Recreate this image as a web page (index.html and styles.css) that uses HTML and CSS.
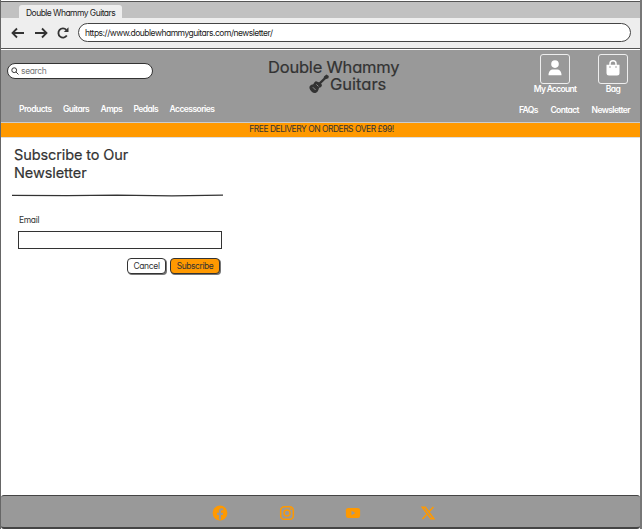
FILE: index.html
```html
<!DOCTYPE html>
<html lang="en">
<head>
<meta charset="utf-8">
<title>Double Whammy Guitars</title>
<link rel="stylesheet" href="styles.css">
</head>
<body>
<div class="window">
  <div class="tabs"><div class="tab"><span>Double Whammy Guitars</span></div></div>
  <div class="toolbar">
    <svg class="arrow" viewBox="0 0 14 12"><path d="M13 6H2M6 1.5L1.5 6L6 10.5"/></svg>
    <svg class="arrow" viewBox="0 0 14 12"><path d="M1 6H12M8 1.5L12.5 6L8 10.5"/></svg>
    <svg class="reload" viewBox="0 0 12 12"><path d="M9.8 8.6A4.6 4.6 0 1 1 9.3 2.8"/><path class="solid" d="M11.5 .3V5H6.8Z"/></svg>
    <div class="address"><span>https://www.doublewhammyguitars.com/newsletter/</span></div>
  </div>
  <header class="header">
    <div class="left">
      <div class="search">
        <svg viewBox="0 0 9 9"><circle cx="3.6" cy="3.6" r="2.7"/><path d="M5.7 5.7L8.4 8.4"/></svg>
        <span>search</span>
      </div>
      <nav class="nav main-nav">
        <a>Products</a><a>Guitars</a><a>Amps</a><a>Pedals</a><a>Accessories</a>
      </nav>
    </div>
    <div class="logo">
      <div class="logo-top">Double Whammy</div>
      <div class="logo-bottom">
        <svg viewBox="0 0 20 20"><path d="M10.2 8.2L14.6 4L15 2.4L17.4 .4L19.8 2L19.4 4.2L16.6 5.2L12 9.8C13.8 11 12.8 13.4 10.6 13.6C9.6 13.8 10 15.4 8.9 17C7.4 19.4 5 19.8 3 18C1.8 17 .4 15.4 .4 13.6C.4 11.6 2 11 3.4 10.6C4.8 10.3 4.9 8.2 6.4 7.4C7.8 6.7 8.6 8.4 10.2 8.2Z"/><path class="gap" d="M3.8 13.2L6.6 16"/><path class="gap" d="M7.4 10.4L9.4 12.4"/></svg>
        <span>Guitars</span>
      </div>
    </div>
    <div class="right">
      <div class="actions">
        <div class="action account"><div class="box"><svg viewBox="0 0 14 16"><circle cx="7" cy="4.1" r="3.8"/><path d="M.5 15.2C.5 11.6 2.5 9.6 5.2 9.6H8.8C11.5 9.6 13.5 11.6 13.5 15.2Z"/></svg></div><span>My Account</span></div>
        <div class="action bag"><div class="box"><svg viewBox="0 0 14 16"><path d="M.5 4.8H13.5V13Q13.5 15.5 11 15.5H3Q.5 15.5 .5 13Z"/><path class="handle" d="M4 7V3.8A3 3 0 0 1 10 3.8V7"/><circle class="eye" cx="4" cy="7" r=".8"/><circle class="eye" cx="10" cy="7" r=".8"/></svg></div><span>Bag</span></div>
      </div>
      <nav class="nav side-nav"><a>FAQs</a><a>Contact</a><a>Newsletter</a></nav>
    </div>
  </header>
  <div class="promo"><span>FREE DELIVERY ON ORDERS OVER £99!</span></div>
  <main class="main">
    <h1><span class="l1">Subscribe to Our</span><br><span class="l2">Newsletter</span></h1>
    <svg class="rule" viewBox="0 0 211 3"><path d="M0 1.3L55 1.6L105 1.1L160 1.8L211 1.2"/></svg>
    <form class="form">
      <label for="email">Email</label>
      <input id="email" type="text">
      <div class="buttons"><button type="button" class="cancel">Cancel</button><button type="button" class="submit">Subscribe</button></div>
    </form>
  </main>
  <footer class="footer">
    <svg class="fb" viewBox="0 0 16 16"><circle cx="8" cy="8" r="7.4"/><path class="cut" d="M6.9 14.6V9.9H5V7.7H6.9V6.2C6.9 4.2 8 3.2 9.7 3.2L11.3 3.4V5.2H10.3C9.3 5.2 9 5.7 9 6.4V7.7H11.2L10.8 9.9H9V14.6Z"/></svg>
    <svg class="ig" viewBox="0 0 16 16"><rect x="1.7" y="1.7" width="12.6" height="12.6" rx="3.6"/><circle cx="8" cy="8" r="3"/><circle class="dot" cx="11.8" cy="4.2" r=".9"/></svg>
    <svg class="yt" viewBox="0 0 16 16"><rect x=".9" y="2.9" width="14.2" height="10.2" rx="2.4"/><path class="cut" d="M6.5 5.8V10.2L10.3 8Z"/></svg>
    <svg class="tx" viewBox="0 0 16 16"><path d="M2.3 2.2H5.3L13.9 13.8H10.9Z"/><path d="M13.4 1.9L8.9 7M7 9L2.5 14.1"/></svg>
  </footer>
</div>
</body>
</html>
```

FILE: styles.css
```css
* { box-sizing: border-box; }
body {
  margin: 0;
  background: #fff;
  color: #333;
  font: 8.5px/12px Inter, "Liberation Sans", sans-serif;
  font-feature-settings: "cv11";
  letter-spacing: -0.35px;
}
svg { display: block; flex: none; fill: none; stroke: #333; }
span, a { white-space: nowrap; }
.window {
  width: 642px;
  height: 529px;
  display: flex;
  flex-direction: column;
  border: 1px solid #666;
  border-top: 0;
  border-right: 2px solid #777;
  border-bottom: 0;
}
.tabs { height: 17px; flex: none; background: #c1c1c1; border-top: 1px solid #555; padding: 3px 0 0 18px; margin-top: 1px; }
.tab { width: 103px; height: 13px; background: #eee; border-radius: 3px 3px 0 0; padding: 2px 0 0 7px; color: #222; letter-spacing: -0.54px; }
.toolbar {
  height: 31px;
  flex: none;
  display: flex;
  align-items: center;
  background: #eee;
  border-bottom: 1px solid #555;
  padding: 0 9px 1px 10px;
}
.arrow { width: 14px; height: 12px; stroke-width: 1.8; margin-right: 9px; }
.reload { width: 12px; height: 12px; stroke-width: 1.8; margin-right: 9px; }
.reload .solid { fill: #333; stroke: none; }
.address { flex: 1; height: 19px; background: #fff; border: 1px solid #444; border-radius: 10px; padding: 3px 6px; color: #222; letter-spacing: -0.49px; }
.header { height: 74px; flex: none; display: flex; justify-content: space-between; background: #999; border-top: 1.5px solid #fff; border-bottom: 1px solid #ccc; }
.left { width: 260px; padding: 13px 0 0 6px; }
.search { width: 146px; height: 16px; display: flex; align-items: center; gap: 2px; background: #fff; border: 1px solid #333; border-radius: 8px; padding-left: 3px; color: #777; }
.search svg { width: 8px; height: 8px; stroke-width: 1.1; }
.nav { display: flex; color: #fff; font-weight: 600; letter-spacing: -0.54px; }
.main-nav { margin-top: 24px; padding-left: 12px; gap: 11.3px; }
.logo { width: 140px; padding-top: 9px; color: #333; font-size: 16.5px; line-height: 17px; letter-spacing: -0.2px; -webkit-text-stroke: 0.2px #333; }
.logo-top { white-space: nowrap; padding-left: 7px; }
.logo-bottom { display: flex; padding-left: 48px; }
.logo-bottom svg { width: 20px; height: 20px; margin-top: -2px; stroke: none; fill: #333; }
.logo-bottom .gap { stroke: #999; stroke-width: .9; }
.logo-bottom span { margin-left: 1px; letter-spacing: 0; }
.right { width: 239px; padding: 4px 10px 0 0; color: #fff; }
.actions { display: flex; justify-content: flex-end; gap: 22px; margin-right: 2px; }
.action { width: 42px; display: flex; flex-direction: column; align-items: center; line-height: 10px; font-weight: 600; letter-spacing: -0.7px; }
.bag { width: 30px; letter-spacing: -0.5px; }
.box { width: 30px; height: 30px; display: flex; align-items: center; justify-content: center; border: 1px solid #eee; border-radius: 3px; }
.box svg { width: 14px; height: 16px; fill: #fff; stroke: none; margin-top: -2px; }
.box .handle { fill: none; stroke: #fff; stroke-width: 1.5; }
.box .eye { fill: #999; }
.side-nav { justify-content: flex-end; gap: 12.5px; margin-top: 10px; letter-spacing: -0.6px; }
.promo { height: 15px; flex: none; background: #f90; text-align: center; line-height: 12px; border-bottom: 1px solid #ddd; letter-spacing: -0.5px; padding-left: 2px; }
.main { flex: 1; padding: 8px 0 0 11px; }
h1 { margin: 0 0 0 2px; font-size: 14.5px; line-height: 18px; font-weight: 400; letter-spacing: -0.1px; -webkit-text-stroke: 0.2px #333; }
.rule { width: 211px; height: 3px; margin-top: 12px; stroke-width: 1.2; }
.form { width: 204px; margin: 17px 0 0 6px; display: flex; flex-direction: column; }
.form label { padding-left: 1px; }
.form input { height: 18px; margin-top: 5px; border: 1.2px solid #333; background: #fff; }
.buttons { display: flex; justify-content: flex-end; gap: 4px; margin: 9px 2px 0 0; }
button { height: 15.5px; padding: 0; font: inherit; font-feature-settings: inherit; letter-spacing: inherit; color: #333; background: #fff; border: 1px solid #333; border-radius: 4px; box-shadow: 1px 1px 0 #777; }
.cancel { width: 39px; }
.submit { width: 50px; background: #f90; letter-spacing: -0.45px; }
.footer { height: 34px; flex: none; display: flex; align-items: center; background: #999; border-top: 1.5px solid #444; border-bottom: 2px solid #444; border-radius: 3px; padding: 2px 0 0 211px; }
.footer svg { width: 16px; height: 16px; stroke: none; fill: #f90; }
.footer .cut { fill: #999; }
.footer .ig { margin-left: 51px; fill: none; stroke: #f90; stroke-width: 1.5; }
.footer .ig .dot { fill: #f90; stroke: none; }
.footer .yt { margin-left: 50px; }
.footer .tx { margin-left: 59px; fill: none; stroke: #f90; stroke-width: 1.5; }
```
